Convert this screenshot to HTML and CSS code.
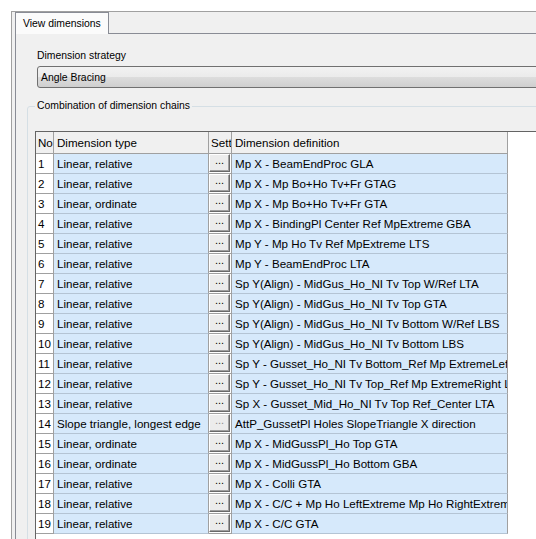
FILE: index.html
```html
<!DOCTYPE HTML>
<html>
<head>
<title>View dimensions</title>
<link rel="stylesheet" href="styles.css">
</head>
<body>
<div class="window">
  <div class="tabstrip"><div class="tab">View dimensions</div></div>
  <div class="tabpage">
    <div class="strategy">
      <div class="caption">Dimension strategy</div>
      <div class="combo">Angle Bracing</div>
    </div>
    <fieldset class="chains">
      <legend>Combination of dimension chains</legend>
      <div class="grid">
        <table>
          <colgroup><col class="c-no"><col class="c-type"><col class="c-set"><col class="c-def"></colgroup>
          <tr><th class="no">No.</th><th class="type">Dimension type</th><th class="set">Settings</th><th class="def">Dimension definition</th></tr>
          <tr><td class="no">1</td><td class="type">Linear, relative</td><td class="set"><div class="btn">...</div></td><td class="def">Mp X - BeamEndProc GLA</td></tr>
          <tr><td class="no">2</td><td class="type">Linear, relative</td><td class="set"><div class="btn">...</div></td><td class="def">Mp X - Mp Bo+Ho Tv+Fr GTAG</td></tr>
          <tr><td class="no">3</td><td class="type">Linear, ordinate</td><td class="set"><div class="btn">...</div></td><td class="def">Mp X - Mp Bo+Ho Tv+Fr GTA</td></tr>
          <tr><td class="no">4</td><td class="type">Linear, relative</td><td class="set"><div class="btn">...</div></td><td class="def">Mp X - BindingPl Center Ref MpExtreme GBA</td></tr>
          <tr><td class="no">5</td><td class="type">Linear, relative</td><td class="set"><div class="btn">...</div></td><td class="def">Mp Y - Mp Ho Tv Ref MpExtreme LTS</td></tr>
          <tr><td class="no">6</td><td class="type">Linear, relative</td><td class="set"><div class="btn">...</div></td><td class="def">Mp Y - BeamEndProc LTA</td></tr>
          <tr><td class="no">7</td><td class="type">Linear, relative</td><td class="set"><div class="btn">...</div></td><td class="def">Sp Y(Align) - MidGus_Ho_NI Tv Top W/Ref LTA</td></tr>
          <tr><td class="no">8</td><td class="type">Linear, relative</td><td class="set"><div class="btn">...</div></td><td class="def">Sp Y(Align) - MidGus_Ho_NI Tv Top GTA</td></tr>
          <tr><td class="no">9</td><td class="type">Linear, relative</td><td class="set"><div class="btn">...</div></td><td class="def">Sp Y(Align) - MidGus_Ho_NI Tv Bottom W/Ref LBS</td></tr>
          <tr><td class="no">10</td><td class="type">Linear, relative</td><td class="set"><div class="btn">...</div></td><td class="def">Sp Y(Align) - MidGus_Ho_NI Tv Bottom LBS</td></tr>
          <tr><td class="no">11</td><td class="type">Linear, relative</td><td class="set"><div class="btn">...</div></td><td class="def">Sp Y - Gusset_Ho_NI Tv Bottom_Ref Mp ExtremeLeft LBS</td></tr>
          <tr><td class="no">12</td><td class="type">Linear, relative</td><td class="set"><div class="btn">...</div></td><td class="def">Sp Y - Gusset_Ho_NI Tv Top_Ref Mp ExtremeRight LTA</td></tr>
          <tr><td class="no">13</td><td class="type">Linear, relative</td><td class="set"><div class="btn">...</div></td><td class="def">Sp X - Gusset_Mid_Ho_NI Tv Top Ref_Center LTA</td></tr>
          <tr><td class="no">14</td><td class="type">Slope triangle, longest edge</td><td class="set"><div class="btn off">...</div></td><td class="def">AttP_GussetPl Holes SlopeTriangle X direction</td></tr>
          <tr><td class="no">15</td><td class="type">Linear, ordinate</td><td class="set"><div class="btn">...</div></td><td class="def">Mp X - MidGussPl_Ho Top GTA</td></tr>
          <tr><td class="no">16</td><td class="type">Linear, ordinate</td><td class="set"><div class="btn">...</div></td><td class="def">Mp X - MidGussPl_Ho Bottom GBA</td></tr>
          <tr><td class="no">17</td><td class="type">Linear, relative</td><td class="set"><div class="btn">...</div></td><td class="def">Mp X - Colli GTA</td></tr>
          <tr><td class="no">18</td><td class="type">Linear, relative</td><td class="set"><div class="btn">...</div></td><td class="def">Mp X - C/C + Mp Ho LeftExtreme Mp Ho RightExtreme GTA</td></tr>
          <tr><td class="no">19</td><td class="type">Linear, relative</td><td class="set"><div class="btn">...</div></td><td class="def">Mp X - C/C GTA</td></tr>
        </table>
      </div>
    </fieldset>
  </div>
</div>
</body>
</html>
```

FILE: styles.css
```css
html, body {
  margin: 0;
  height: 100%;
  overflow: hidden;
  background: #fff;
}

body {
  font-family: "Liberation Sans", Arial, sans-serif;
  font-size: 10.4px;
  color: #000;
}

.window {
  margin: 11px 0 0 11px;
  height: 528px;
  padding-left: 3px;
  border-top: 1px solid #a0a0a0;
  border-left: 1px solid #a0a0a0;
  background: #f0f0f0;
  overflow: hidden;
}

.tabstrip {
  display: flex;
  height: 21px;
}

.tab {
  position: relative;
  height: 21px;
  margin-bottom: -1px;
  padding: 0 7px;
  line-height: 21px;
  border: 1px solid #898c95;
  border-bottom: 0;
  background: #fbfbfb;
}

.tabpage {
  height: 100%;
  border-top: 1px solid #898c95;
  border-left: 1px solid #898c95;
}

.strategy {
  padding: 15px 0 0 21px;
}

.caption {
  line-height: 14px;
}

.combo {
  box-sizing: border-box;
  width: 520px;
  height: 22px;
  margin-top: 3px;
  padding-left: 3px;
  line-height: 21px;
  border: 1px solid #707070;
  border-radius: 3px;
  background: linear-gradient(#f2f2f2, #ebebeb 50%, #dddddd 50%, #cfcfcf);
}

.chains {
  width: 540px;
  height: 600px;
  margin: 11px 0 0 11px;
  padding: 18px 0 0 7px;
  border: 1px solid #d5dfe5;
  border-radius: 3px;
}

.chains legend {
  padding: 0 2px;
  line-height: 14px;
}

.grid {
  height: 500px;
  border-top: 1px solid #646464;
  border-left: 1px solid #646464;
  background: #fff;
}

table {
  border-collapse: separate;
  border-spacing: 0;
  table-layout: fixed;
  width: 472px;
  font-size: 11.6px;
}

.c-no { width: 18px; }
.c-type { width: 155px; }
.c-set { width: 23px; }
.c-def { width: 276px; }

th, td {
  box-sizing: border-box;
  height: 20px;
  padding: 0 2px 0 3px;
  border-right: 1px solid #a0a0a0;
  border-bottom: 1px solid #a0a0a0;
  white-space: nowrap;
  overflow: hidden;
  text-align: left;
  font-weight: normal;
}

th {
  height: 22px;
  background: #f0f0f0;
}

td.no {
  padding-left: 2px;
  background: #fff;
}

td.type, td.def {
  background: #d6e9fb;
  border-bottom-color: #b4c4d4;
}

th.no {
  padding: 0 0 0 2px;
  text-overflow: clip;
}

td.set {
  padding: 0 1px 1px 0;
  background: #fff;
}

th.set {
  padding-left: 2px;
}

.btn {
  box-sizing: border-box;
  height: 18px;
  font-size: 11px;
  line-height: 10px;
  text-align: center;
  border: 1px solid;
  border-color: #fff #696969 #696969 #fff;
  box-shadow: inset -1px -1px 0 #a0a0a0;
  background: #ececec;
}

.btn.off {
  color: #8a8a8a;
}
```
